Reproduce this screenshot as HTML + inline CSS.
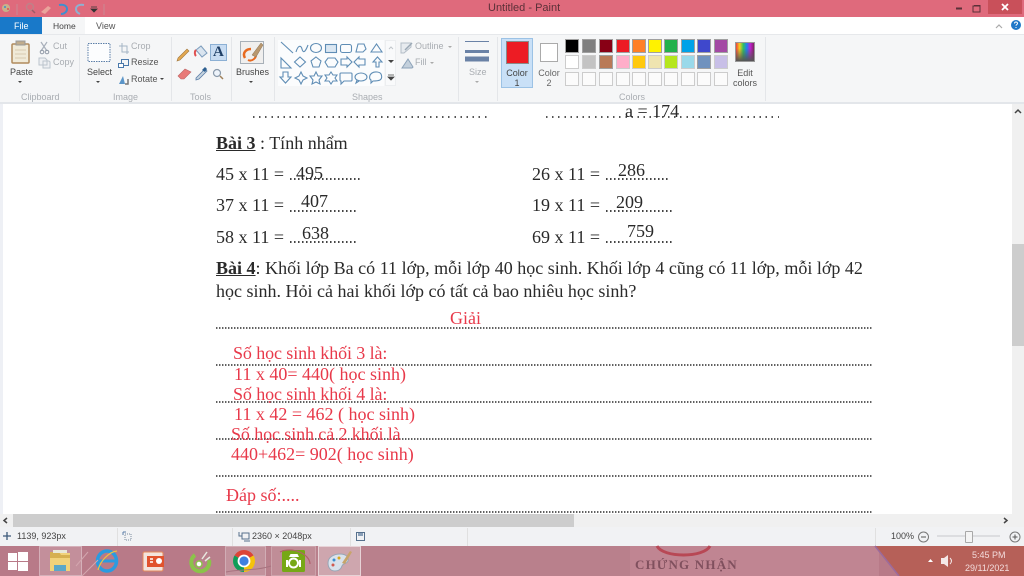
<!DOCTYPE html>
<html><head><meta charset="utf-8"><title>Untitled - Paint</title>
<style>
html,body{margin:0;padding:0;width:1024px;height:576px;overflow:hidden;background:#fff}
body{position:relative;font-family:"Liberation Sans",sans-serif;filter:blur(.3px)}
.a{position:absolute}
.t{position:absolute;white-space:nowrap;line-height:1;font-size:9px;color:#555}
.g{color:#a9adb2}
.c{text-align:center}
.d{position:absolute;white-space:nowrap;line-height:1;font-family:"Liberation Serif",serif;font-size:18px;color:#2a2a2a}
.r{color:#e8394a}
.s{letter-spacing:-.1px}
.h{position:absolute;white-space:nowrap;line-height:1;font-family:"Liberation Serif",serif;font-size:18px;color:#2a2a2a}
.l{position:absolute;left:216px;width:656px;height:2px;opacity:.85;background:repeating-linear-gradient(90deg,#444 0 1px,#aaa 1px 2px,transparent 2px 3px)}
.dd{position:absolute;height:2px;background:repeating-linear-gradient(90deg,#444 0 1px,#999 1px 2px,transparent 2px 4px)}
.dw{position:absolute;height:2px;background:repeating-linear-gradient(90deg,#555 0 1.5px,transparent 1.5px 6.1px)}
.sep{position:absolute;top:37px;width:1px;height:64px;background:#e4e6e9}
.sw{position:absolute;width:14px;height:14px;box-sizing:border-box;border:1px solid #a0a0a0}
.em{position:absolute;width:14px;height:14px;box-sizing:border-box;border:1px solid #ccc;background:#fbfbfb}
</style></head><body>

<!-- title bar -->
<div class="a" style="left:0;top:0;width:1024px;height:17px;background:#df6a7c"></div>
<div class="t" style="left:488px;top:3px;font-size:11px;color:#5b3038">Untitled - Paint</div>
<div class="a" style="left:988px;top:0;width:34px;height:14px;background:#c9505a"></div>

<!-- tabs -->
<div class="a" style="left:0;top:17px;width:1024px;height:17px;background:#fff"></div>
<div class="a" style="left:0;top:17px;width:42px;height:17px;background:#1979c9"></div>
<div class="t" style="left:14px;top:22px;color:#fff">File</div>
<div class="a" style="left:42px;top:17px;width:43px;height:18px;background:#f5f6f7"></div>
<div class="t" style="left:53px;top:22px;color:#444;font-size:8.5px">Home</div>
<div class="t" style="left:96px;top:22px;color:#555">View</div>

<!-- ribbon -->
<div class="a" style="left:0;top:34px;width:1024px;height:69px;background:#f5f6f7;border-top:1px solid #e6e8eb;box-sizing:border-box"></div>
<div class="a" style="left:0;top:102px;width:1024px;height:2px;background:#e3e6ea"></div>
<div class="sep" style="left:79px"></div><div class="sep" style="left:171px"></div><div class="sep" style="left:231px"></div><div class="sep" style="left:274px"></div><div class="sep" style="left:458px"></div><div class="sep" style="left:497px"></div><div class="sep" style="left:765px"></div>

<div class="t" style="left:10px;top:68px;color:#444">Paste</div>
<div class="t g" style="left:53px;top:42px">Cut</div>
<div class="t g" style="left:53px;top:58px">Copy</div>
<div class="t g" style="left:21px;top:93px">Clipboard</div>
<div class="t" style="left:87px;top:68px;color:#444">Select</div>
<div class="t g" style="left:131px;top:42px">Crop</div>
<div class="t" style="left:131px;top:58px;color:#555">Resize</div>
<div class="t" style="left:131px;top:75px;color:#555">Rotate</div>
<div class="t g" style="left:113px;top:93px">Image</div>
<div class="t g" style="left:190px;top:93px">Tools</div>
<div class="t" style="left:236px;top:68px;color:#444">Brushes</div>
<div class="t g" style="left:415px;top:42px">Outline</div>
<div class="t g" style="left:415px;top:58px">Fill</div>
<div class="t g" style="left:352px;top:93px">Shapes</div>
<div class="t g" style="left:469px;top:68px">Size</div>

<div class="a" style="left:501px;top:38px;width:32px;height:50px;box-sizing:border-box;background:#c9e0f7;border:1px solid #9cc2e5"></div>
<div class="a" style="left:506px;top:41px;width:23px;height:23px;box-sizing:border-box;background:#ed1c24;border:1px solid #8a8a8a"></div>
<div class="t c" style="left:501px;top:68px;width:32px;color:#444;line-height:10px">Color<br>1</div>
<div class="a" style="left:540px;top:43px;width:18px;height:19px;box-sizing:border-box;background:#fff;border:1px solid #aaa"></div>
<div class="t c" style="left:533px;top:68px;width:32px;color:#666;line-height:10px">Color<br>2</div>

<div class="sw" style="left:565px;top:39px;background:#000"></div><div class="sw" style="left:582px;top:39px;background:#7f7f7f"></div><div class="sw" style="left:599px;top:39px;background:#880015"></div><div class="sw" style="left:616px;top:39px;background:#ed1c24"></div><div class="sw" style="left:632px;top:39px;background:#ff7f27"></div><div class="sw" style="left:648px;top:39px;background:#fff200"></div><div class="sw" style="left:664px;top:39px;background:#22b14c"></div><div class="sw" style="left:681px;top:39px;background:#00a2e8"></div><div class="sw" style="left:697px;top:39px;background:#3f48cc"></div><div class="sw" style="left:714px;top:39px;background:#a349a4"></div>
<div class="sw" style="left:565px;top:55px;background:#fff;border-color:#ccc"></div><div class="sw" style="left:582px;top:55px;background:#c3c3c3;border-color:#ccc"></div><div class="sw" style="left:599px;top:55px;background:#b97a57"></div><div class="sw" style="left:616px;top:55px;background:#ffaec9;border-color:#ccc"></div><div class="sw" style="left:632px;top:55px;background:#ffc90e;border-color:#ccc"></div><div class="sw" style="left:648px;top:55px;background:#efe4b0;border-color:#ccc"></div><div class="sw" style="left:664px;top:55px;background:#b5e61d;border-color:#ccc"></div><div class="sw" style="left:681px;top:55px;background:#99d9ea;border-color:#ccc"></div><div class="sw" style="left:697px;top:55px;background:#7092be"></div><div class="sw" style="left:714px;top:55px;background:#c8bfe7;border-color:#ccc"></div>
<div class="em" style="left:565px;top:72px"></div><div class="em" style="left:582px;top:72px"></div><div class="em" style="left:599px;top:72px"></div><div class="em" style="left:616px;top:72px"></div><div class="em" style="left:632px;top:72px"></div><div class="em" style="left:648px;top:72px"></div><div class="em" style="left:664px;top:72px"></div><div class="em" style="left:681px;top:72px"></div><div class="em" style="left:697px;top:72px"></div><div class="em" style="left:714px;top:72px"></div>

<div class="a" style="left:735px;top:42px;width:20px;height:20px;box-sizing:border-box;border:1px solid #999;background:linear-gradient(180deg,transparent 30%,#555 100%),linear-gradient(90deg,#ef4040,#f5d020,#30c060,#2080f0,#c020d0,#802060)"></div>
<div class="t c" style="left:727px;top:68px;width:36px;color:#555;line-height:10px">Edit<br>colors</div>
<div class="t g" style="left:619px;top:93px">Colors</div>

<!-- shape gallery bg -->
<div class="a" style="left:278px;top:40px;width:106px;height:46px;background:#fbfcfd"></div>
<div class="a" style="left:385px;top:40px;width:11px;height:46px;background:#f9fafb;border:1px solid #eceef0;box-sizing:border-box"></div>

<!-- document -->
<div class="a" style="left:0;top:104px;width:1012px;height:410px;background:#fff;overflow:hidden"></div>
<div class="a" style="left:0;top:104px;width:3px;height:410px;background:#eef0f5"></div>

<div class="dw" style="left:253px;top:116px;width:235px"></div>
<div class="dw" style="left:546px;top:116px;width:233px"></div>
<div class="d" style="left:625px;top:102px;clip-path:inset(2px 0 0 0)">a = 174</div>

<div class="h" style="left:216px;top:134px"><b style="text-decoration:underline">Bài 3</b> : Tính nhẩm</div>

<div class="d" style="left:216px;top:165px">45 x 11 =</div>
<div class="dd" style="left:290px;top:178px;width:71px"></div>
<div class="d" style="left:296px;top:164px">495</div>
<div class="d" style="left:216px;top:196px">37 x 11 =</div>
<div class="dd" style="left:290px;top:210px;width:66px"></div>
<div class="d" style="left:301px;top:192px">407</div>
<div class="d" style="left:216px;top:228px">58 x 11 =</div>
<div class="dd" style="left:290px;top:241px;width:66px"></div>
<div class="d" style="left:302px;top:224px">638</div>

<div class="d" style="left:532px;top:165px">26 x 11 =</div>
<div class="dd" style="left:606px;top:178px;width:62px"></div>
<div class="d" style="left:618px;top:161px">286</div>
<div class="d" style="left:532px;top:196px">19 x 11 =</div>
<div class="dd" style="left:606px;top:210px;width:66px"></div>
<div class="d" style="left:616px;top:193px">209</div>
<div class="d" style="left:532px;top:228px">69 x 11 =</div>
<div class="dd" style="left:606px;top:241px;width:66px"></div>
<div class="d" style="left:627px;top:222px">759</div>

<div class="h" style="left:216px;top:259px;word-spacing:.03px"><b style="text-decoration:underline">Bài 4</b>: Khối lớp Ba có 11 lớp, mỗi lớp 40 học sinh. Khối lớp 4 cũng có 11 lớp, mỗi lớp 42</div>
<div class="h" style="left:216px;top:282px">học sinh. Hỏi cả hai khối lớp có tất cả bao nhiêu học sinh?</div>

<div class="l" style="top:327px"></div>
<div class="l" style="top:364px"></div>
<div class="l" style="top:401px"></div>
<div class="l" style="top:438px"></div>
<div class="l" style="top:475px"></div>
<div class="l" style="top:511px"></div>

<div class="d r" style="left:450px;top:309px">Giải</div>
<div class="d r s" style="left:233px;top:344px">Số học sinh khối 3 là:</div>
<div class="d r" style="left:234px;top:365px">11 x 40= 440( học sinh)</div>
<div class="d r s" style="left:233px;top:385px">Số học sinh khối 4 là:</div>
<div class="d r" style="left:234px;top:405px">11 x 42 = 462 ( học sinh)</div>
<div class="d r s" style="left:231px;top:425px">Số học sinh cả 2 khối là</div>
<div class="d r" style="left:231px;top:445px">440+462= 902( học sinh)</div>
<div class="d r" style="left:226px;top:486px">Đáp số:....</div>

<!-- vertical scrollbar -->
<div class="a" style="left:1012px;top:104px;width:12px;height:410px;background:#f0f0f0"></div>
<div class="a" style="left:1012px;top:244px;width:12px;height:102px;background:#cdcdcd"></div>

<!-- horizontal scrollbar -->
<div class="a" style="left:0;top:514px;width:1024px;height:13px;background:#f0f0f0"></div>
<div class="a" style="left:13px;top:514px;width:561px;height:13px;background:#cdcdcd"></div>

<!-- status bar -->
<div class="a" style="left:0;top:527px;width:1024px;height:19px;background:#f1f2f4"></div>
<div class="a" style="left:117px;top:528px;width:1px;height:18px;background:#e0e0e0"></div>
<div class="a" style="left:232px;top:528px;width:1px;height:18px;background:#e0e0e0"></div>
<div class="a" style="left:350px;top:528px;width:1px;height:18px;background:#e0e0e0"></div>
<div class="a" style="left:467px;top:528px;width:1px;height:18px;background:#e0e0e0"></div>
<div class="a" style="left:875px;top:528px;width:1px;height:18px;background:#e0e0e0"></div>
<div class="t" style="left:17px;top:532px;color:#444">1139, 923px</div>
<div class="t" style="left:252px;top:532px;color:#444">2360 × 2048px</div>
<div class="t" style="left:891px;top:532px;color:#444">100%</div>
<div class="a" style="left:937px;top:535px;width:63px;height:2px;background:#dcdde0"></div>
<div class="a" style="left:965px;top:531px;width:8px;height:12px;box-sizing:border-box;background:#f4f4f4;border:1px solid #a8a8a8;border-radius:1px"></div>

<!-- taskbar -->
<div class="a" style="left:0;top:546px;width:1024px;height:30px;background:#b87a88"></div>
<div class="a" style="left:624px;top:546px;width:255px;height:30px;background:#c08592"></div>
<div class="a" style="left:200px;top:546px;width:430px;height:30px;background:#b9808c"></div>
<div class="a" style="left:875px;top:546px;width:149px;height:30px;background:#b66058;clip-path:polygon(0 0,100% 0,100% 100%,24px 100%)"></div>
<div class="a" style="left:39px;top:546px;width:43px;height:30px;box-sizing:border-box;background:rgba(255,255,255,.16);border:1px solid rgba(255,255,255,.3)"></div>
<div class="a" style="left:225px;top:546px;width:41px;height:30px;box-sizing:border-box;background:rgba(255,255,255,.14);border:1px solid rgba(255,255,255,.25)"></div>
<div class="a" style="left:271px;top:546px;width:45px;height:30px;box-sizing:border-box;background:rgba(255,255,255,.1);border:1px solid rgba(255,255,255,.2)"></div>
<div class="a" style="left:318px;top:546px;width:43px;height:30px;box-sizing:border-box;background:rgba(255,255,255,.3);border:1px solid rgba(255,255,255,.5)"></div>
<div class="t" style="left:635px;top:558px;font-family:'Liberation Serif',serif;font-size:13px;color:#80505e;letter-spacing:1.2px;font-weight:bold">CHỨNG NHẬN</div>
<div class="t" style="left:972px;top:551px;color:#f3dcdc">5:45 PM</div>
<div class="t" style="left:965px;top:564px;color:#f3dcdc;font-size:9px">29/11/2021</div>

<!-- icons -->
<svg class="a" style="left:0;top:0" width="1024" height="576" viewBox="0 0 1024 576" fill="none">
 <!-- qat -->
 <circle cx="6" cy="8" r="4" fill="#c9b08a"/><circle cx="5" cy="7" r="1" fill="#3a8fd0"/><circle cx="8" cy="9" r="1" fill="#e05050"/>
 <circle cx="30" cy="7" r="3.5" stroke="#c08088" stroke-width="1.5"/><path d="M32 10l3 3" stroke="#a05a66" stroke-width="1.5"/>
 <path d="M41 12l7-6 3 2-6 6z" fill="#eaa49c"/>
 <path d="M59 5c5-1 8 1 8 4s-3 5-6 5" stroke="#3f8fd0" stroke-width="2"/>
 <path d="M84 5c-5-1-8 1-8 4s2 4 4 5" stroke="#8fb0d0" stroke-width="2"/>
 <path d="M91 7h6M91 9l3 3 3-3z" stroke="#333" fill="#333" stroke-width=".8"/>
 <path d="M17 4v11M104 4v11" stroke="#c98a94"/>
 <!-- window -->
 <rect x="956" y="7.5" width="6" height="2" fill="#5a3038"/>
 <path d="M974 5.5h6v6M974 6h6v6h-7v-6z" stroke="#5a3038"/>
 <path d="M1002 4l6 6M1008 4l-6 6" stroke="#fff" stroke-width="1.8"/>
 <path d="M996 28l3-3 3 3" stroke="#aaa" stroke-width="1.2"/>
 <circle cx="1016" cy="25" r="5" fill="#1f78c8"/><path d="M1014.5 23.5c0-2 3-2 3 0 0 1-1.5 1-1.5 2.2M1016 27v1" stroke="#fff"/>
 <!-- paste -->
 <rect x="12" y="44" width="17" height="19" rx="1" fill="#f0ead8" stroke="#b08a5c" stroke-width="1.5"/>
 <rect x="16" y="41" width="9" height="4" fill="#c0ac8c" stroke="#999"/>
 <path d="M15 50h11M15 54h11M15 58h11" stroke="#d9cbb0"/>
 <path d="M18 81l2 2 2-2z" fill="#444"/>
 <!-- cut/copy -->
 <path d="M41 42l6 9M47 42l-6 9" stroke="#a9b0bb" stroke-width="1.2"/><circle cx="42" cy="52" r="1.8" stroke="#8f98a5"/><circle cx="47" cy="52" r="1.8" stroke="#8f98a5"/>
 <path d="M39 58h6l2 2v5h-8zM43 61h6l1 1v6h-7z" fill="#eef0f3" stroke="#bcc4cc"/>
 <!-- select -->
 <rect x="88" y="43.5" width="22" height="18" stroke="#5b7ea8" stroke-dasharray="1.5 1" fill="#fcfdfe"/>
 <path d="M96 81l2 2 2-2z" fill="#444"/>
 <!-- crop/resize/rotate -->
 <path d="M122 43v9h7M119 46h8v8" stroke="#a5b5c5"/>
 <rect x="121.500" y="59.500" width="7" height="6" stroke="#4a79ab"/><rect x="118.500" y="63.500" width="5" height="4" fill="#fff" stroke="#4a79ab"/>
 <path d="M119 84l4-8 2 8z" fill="#5b95c8"/><path d="M125 84h3v-5" stroke="#777" stroke-width="1.5"/>
 <path d="M160 78l2 2 2-2z" fill="#444"/>
 <!-- tools -->
 <path d="M178 58l9-9 2 2-9 9-3 1z" fill="#e3a850" stroke="#a07840" stroke-width=".6"/>
 <path d="M196 50l5-4 6 7-5 4z" fill="#d9e4ef" stroke="#7d9dbd"/><path d="M196 50c-2 2-1 5 0 6" stroke="#e05050" stroke-width="2"/>
 <rect x="210.500" y="44.500" width="16" height="16" fill="#c8dcf2" stroke="#8cb0d4"/>
 <path d="M178 76l7-7 6 3-7 7h-3z" fill="#e87a78" stroke="#bd6666" stroke-width=".6"/>
 <path d="M196 78l9-9 2 2-8 8-3 1z" fill="#c7d4df" stroke="#5b7ea8" stroke-width=".8"/><path d="M202 70l3-3 2 2-2 3z" fill="#2d5f90"/>
 <circle cx="217" cy="73" r="3.5" stroke="#8a9aab" stroke-width="1.2" fill="#eef4fb"/><path d="M220 76l3 3" stroke="#a0815a" stroke-width="1.5"/>
 <!-- brushes -->
 <rect x="240.500" y="41.500" width="23" height="22" fill="#f0efee" stroke="#a8b0b8"/>
 <path d="M245 58c-3-5 1-9 6-9" stroke="#e86a20" stroke-width="2.500"/><path d="M248 60c4 2 8-2 8-5" stroke="#e86a20" stroke-width="2"/>
 <path d="M252 55l9-12 2 2-7 12z" fill="#b89870" stroke="#8a7050" stroke-width=".5"/>
 <path d="M249 81l2 2 2-2z" fill="#444"/>
 <!-- shapes -->
 <g stroke="#5f8db5" stroke-width="1.100" fill="none">
  <path d="M281 42l12 11"/>
  <path d="M296 52c2-7 5-7 6-3s3 4 6-4"/>
  <ellipse cx="316" cy="48" rx="5.500" ry="4.500"/>
  <rect x="325.500" y="44.500" width="11" height="8" fill="#dbe7f2"/>
  <rect x="340.500" y="44.500" width="11" height="8" rx="2"/>
  <path d="M356 52l2-8h6l2 5-3 3z"/>
  <path d="M371 52l5.500-8 5.500 8z"/>
  <path d="M281 68v-10l10 10z"/>
  <path d="M300 57l5.500 5-5.500 5-5.500-5z"/>
  <path d="M316 57l5 4-2 6h-6l-2-6z"/>
  <path d="M328 58h7l3 4-3 5h-7l-3-5z"/>
  <path d="M341 59h6v-2l5 5-5 5v-2h-6z"/>
  <path d="M365 59h-6v-2l-5 5 5 5v-2h6z"/>
  <path d="M373 62l4.500-5 4.500 5h-3v5h-3v-5z"/>
  <path d="M283 72h5v5h3l-5.500 6-5.500-6h3z"/>
  <path d="M301 72l2 4 4 2-4 2-2 4-2-4-4-2 4-2z"/>
  <path d="M316 72l2 4h4l-3 4 1 4-4-2-4 2 1-4-3-4h4z"/>
  <path d="M331 72l2 3h4l-2 3 2 3h-4l-2 3-2-3h-4l2-3-2-3h4z"/>
  <path d="M341 73h10a1 1 0 0 1 1 1v6a1 1 0 0 1-1 1h-7l-3 3v-3a1 1 0 0 1-1-1v-6a1 1 0 0 1 1-1z"/>
  <ellipse cx="361" cy="77" rx="6" ry="4"/><path d="M357 80l-1 3 3-2"/>
  <path d="M372 73c3-2 8-1 9 1s1 5-1 6-6 1-7 1l-2 2v-3c-2-1-2-5 1-7z"/>
 </g>
 <path d="M389 49l2-2 2 2" stroke="#c0c5ca"/><path d="M388 62l3 3 3-3z" fill="#444" transform="translate(0,-2)"/><path d="M388 75h6M388 77l3 3 3-3z" stroke="#444" fill="#444" stroke-width=".8"/>
 <!-- outline/fill -->
 <path d="M401 43h10v4l-7 6h-3z" fill="#e7ebef" stroke="#b3bdc7"/><path d="M405 50l7-7" stroke="#9aa8b5" stroke-width="1.500"/>
 <path d="M402 68l6-9 5 8-1 1z" fill="#c3d0dc" stroke="#8ca2b8"/>
 <path d="M448 46l2 2 2-2zM430 62l2 2 2-2z" fill="#aaa"/>
 <!-- size -->
 <path d="M465 41.500h24" stroke="#6a82a6"/><path d="M465 51.500h24" stroke="#6a82a6" stroke-width="3"/><path d="M465 59h24" stroke="#6a82a6" stroke-width="5"/>
 <path d="M475 81l2 2 2-2z" fill="#aaa"/>
 <!-- scroll arrows -->
 <path d="M1015 113l3-3 3 3" stroke="#444" stroke-width="1.500"/>
 <path d="M7 518l-3 2.500 3 2.500" stroke="#444" stroke-width="1.500"/>
 <path d="M1004 518l3 2.500-3 2.500" stroke="#444" stroke-width="1.500"/>
 <!-- status icons -->
 <path d="M7 532v8M3 536h8" stroke="#3d5a7a" stroke-width="1.300"/>
 <rect x="125" y="534" width="6" height="6" stroke="#7a8c9e" stroke-dasharray="1 1"/><path d="M123 532h3M123 532v3" stroke="#5b7ea8"/>
 <rect x="242" y="533" width="7" height="6" stroke="#56708c"/><path d="M239 532v4h3M244 541h6" stroke="#56708c"/>
 <rect x="356.500" y="532.500" width="8" height="8" stroke="#56708c"/><rect x="358" y="533" width="5" height="3" fill="#8aa0b8"/>
 <circle cx="923.500" cy="537" r="5" stroke="#777"/><path d="M921 537h5" stroke="#555"/>
 <circle cx="1015" cy="537" r="5" stroke="#777"/><path d="M1012.500 537h5M1015 534.500v5" stroke="#555"/>
 <!-- taskbar icons -->
 <g fill="#fff"><rect x="8" y="553" width="9" height="8"/><rect x="18" y="552" width="10" height="9"/><rect x="8" y="562" width="9" height="8"/><rect x="18" y="562" width="10" height="9"/></g>
 <path d="M50 553h20v18H50z" fill="#f1d27a"/><path d="M50 552h9l2 3h9v3H50z" fill="#d6b050"/><path d="M54 565h12v6H54z" fill="#5aa7c9"/><rect x="53" y="550" width="14" height="3" fill="#e8e8d8"/>
 <ellipse cx="107" cy="561" rx="9.500" ry="10" stroke="#2a9be0" stroke-width="3.500"/><path d="M99 561h16" stroke="#2a9be0" stroke-width="3"/><path d="M98 570c2-8 10-18 19-19" stroke="#f0c040" stroke-width="1.200"/>
 <rect x="143" y="552" width="20" height="19" rx="1.500" fill="#f3e4dc" stroke="#e68a5c"/><rect x="147" y="556" width="17" height="11" fill="#e1532d"/><path d="M150 559h3M150 562h3" stroke="#fff" stroke-width="1.500"/><circle cx="159" cy="561" r="3" fill="#fff"/>
 <path d="M195 555a9 9 0 1 0 14 5" stroke="#8bc34a" stroke-width="4"/><circle cx="199" cy="564" r="3" fill="#fff" stroke="#8bc34a" stroke-width="1.500"/><path d="M202 559l5-7M205 561l5-4" stroke="#e8e8e0" stroke-width="1.500"/>
 <path d="M244 561L234.500 555.500A11 11 0 0 1 253.500 555.500Z" fill="#db4437"/>
 <path d="M244 561L253.500 555.500A11 11 0 0 1 244 572Z" fill="#f4c20d"/>
 <path d="M244 561L244 572A11 11 0 0 1 234.500 555.500Z" fill="#0f9d58"/>
 <circle cx="244" cy="561" r="5.500" fill="#3f7fe0" stroke="#fff" stroke-width="1.800"/>
 <rect x="282" y="550" width="23" height="22" rx="1.500" fill="#76a816"/><circle cx="293.500" cy="563" r="4.500" stroke="#fff" stroke-width="2"/><path d="M287 560v7M300 560v7" stroke="#fff" stroke-width="2"/><path d="M289 557h10l-1.500-3h-7z" fill="#fff"/>
 <path d="M328 563c0-6 6-9 12-9 6 0 9 3 8 7-1 3-5 2-6 5s-3 5-7 5c-5 0-7-4-7-8z" fill="#d9e2ec" stroke="#97a5b5"/><circle cx="334" cy="560" r="1.500" fill="#3a8fd0"/><circle cx="339" cy="558" r="1.500" fill="#d8a820"/><circle cx="333" cy="565" r="1.500" fill="#d05a50"/><path d="M342 563l8-12 2 1-7 12z" fill="#c8a46a"/>
 <path d="M928 562l2.500-3 2.500 3z" fill="#fff"/>
 <path d="M941 558h3l4-3v12l-4-3h-3z" fill="#f4e8e8"/><path d="M950 558c2 2 2 4 0 6" stroke="#f4e8e8"/>
 <path d="M875 546l24 30" stroke="#9b6a9c" stroke-width="1.500"/>
 <path d="M657 546c6 12 47 12 53 0" stroke="#b84855" stroke-width="3"/>
 <path d="M82 576l16-16M88 552l-12 14" stroke="#d3a6ae" stroke-width="1"/>
 <path d="M280 552c12-6 30 2 30 12" stroke="#b2606c" stroke-width="1.200"/>
 <path d="M226 572c12-3 30-1 45-6" stroke="#a7737f" stroke-width="1"/>
</svg>
<!-- A tool glyph above svg -->
<div class="t" style="left:213px;top:45px;font-family:'Liberation Serif',serif;font-weight:bold;font-size:15px;color:#1f3f66">A</div>
</body></html>
